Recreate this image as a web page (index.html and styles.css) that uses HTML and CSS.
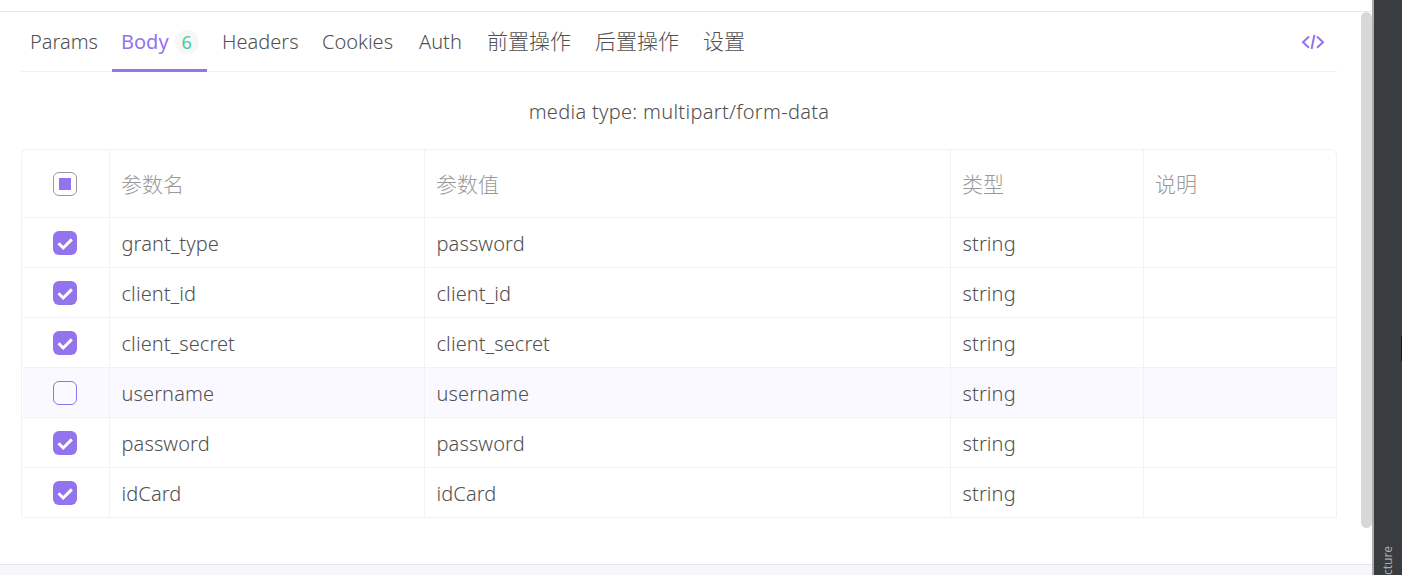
FILE: index.html
```html
<!DOCTYPE html>
<html lang="zh-CN">

<head>
    <meta charset="UTF-8">
    <meta name="viewport" content="width=device-width, initial-scale=1.0">
    <title>Body</title>
    <link rel="stylesheet" href="styles.css">
</head>

<body>

    <div class="container">
        <div class="page">
            <div class="content">
                <div class="panel">
                    <div class="tabs">
                        <a class="tab">Params</a>
                        <a class="tab active">Body <span class="count">6</span></a>
                        <a class="tab">Headers</a>
                        <a class="tab">Cookies</a>
                        <a class="tab">Auth</a>
                        <a class="tab cn">前置操作</a>
                        <a class="tab cn">后置操作</a>
                        <a class="tab cn">设置</a>
                        <svg class="code" viewBox="0 0 24 16" width="24" height="16">
                            <path d="M8 2.5 2 8.2 8 13.8M16 2.5l6 5.7-6 5.6M13.4 1l-2.8 14" />
                        </svg>
                    </div>

                    <div class="media-type">media type: multipart/form-data</div>

                    <table class="params">
                        <thead>
                            <tr>
                                <th class="check"><span class="checkbox partial"></span></th>
                                <th class="name">参数名</th>
                                <th class="value">参数值</th>
                                <th class="type">类型</th>
                                <th class="desc">说明</th>
                            </tr>
                        </thead>
                        <tbody>
                            <tr>
                                <td class="check"><span class="checkbox checked"><svg viewBox="0 0 24 24"><path d="m5.5 12.3 4.7 4.7 8.6-8.6" /></svg></span></td>
                                <td>grant_type</td>
                                <td>password</td>
                                <td>string</td>
                                <td></td>
                            </tr>
                            <tr>
                                <td class="check"><span class="checkbox checked"><svg viewBox="0 0 24 24"><path d="m5.5 12.3 4.7 4.7 8.6-8.6" /></svg></span></td>
                                <td>client_id</td>
                                <td>client_id</td>
                                <td>string</td>
                                <td></td>
                            </tr>
                            <tr>
                                <td class="check"><span class="checkbox checked"><svg viewBox="0 0 24 24"><path d="m5.5 12.3 4.7 4.7 8.6-8.6" /></svg></span></td>
                                <td>client_secret</td>
                                <td>client_secret</td>
                                <td>string</td>
                                <td></td>
                            </tr>
                            <tr class="hover">
                                <td class="check"><span class="checkbox"></span></td>
                                <td>username</td>
                                <td>username</td>
                                <td>string</td>
                                <td></td>
                            </tr>
                            <tr>
                                <td class="check"><span class="checkbox checked"><svg viewBox="0 0 24 24"><path d="m5.5 12.3 4.7 4.7 8.6-8.6" /></svg></span></td>
                                <td>password</td>
                                <td>password</td>
                                <td>string</td>
                                <td></td>
                            </tr>
                            <tr>
                                <td class="check"><span class="checkbox checked"><svg viewBox="0 0 24 24"><path d="m5.5 12.3 4.7 4.7 8.6-8.6" /></svg></span></td>
                                <td>idCard</td>
                                <td>idCard</td>
                                <td>string</td>
                                <td></td>
                            </tr>
                        </tbody>
                    </table>
                </div>
                <div class="scrollbar"></div>
            </div>
            <div class="footer"></div>
        </div>
        <div class="sidebar">
            <span class="label">cture</span>
            <div class="marker"></div>
        </div>
    </div>

</body>

</html>
```
FILE: styles.css
```css
* {
    box-sizing: border-box;
}

body {
    margin: 0;
    font-family: "Noto Sans", "Noto Sans CJK SC", sans-serif;
    font-size: 20px;
    font-weight: 300;
    color: #505050;
    background-color: #fff;
}

.container {
    display: flex;
    height: 575px;
    overflow: hidden;
}

.page {
    display: flex;
    flex-direction: column;
    width: 1372px;
    padding-top: 11px;
}

.content {
    display: flex;
    justify-content: space-between;
    height: 553px;
    border-top: 1px solid #e8e8e8;
}

.panel {
    width: 1316px;
    margin-left: 21px;
}

.tabs {
    display: grid;
    grid-template-columns: 85px 95px 94px 91px 62px 102px 102px 60px 1fr;
    column-gap: 6px;
    align-items: center;
    height: 60px;
    border-bottom: 1px solid #f2f2f2;
}

.tab {
    display: flex;
    align-items: center;
    height: 60px;
    padding: 2px 0 0 9px;
    border-bottom: 3px solid transparent;
    white-space: nowrap;
}

.tab.cn {
    padding: 0 0 2px 9px;
    font-size: 21px;
}

.tab.active {
    color: #9373ee;
    font-weight: 400;
    border-bottom-color: #9373ee;
}

.count {
    width: 24px;
    height: 24px;
    margin-left: 6px;
    border-radius: 50%;
    background-color: #f7f7f7;
    color: #3ecf9b;
    font-size: 18px;
    line-height: 25px;
    text-align: center;
}

.code {
    justify-self: end;
    margin-right: 12px;
    fill: none;
    stroke: #9373ee;
    stroke-width: 2;
}

.media-type {
    height: 77px;
    line-height: 80px;
    letter-spacing: 0.3px;
    text-align: center;
}

.params {
    width: 1316px;
    table-layout: fixed;
    border-collapse: separate;
    border-spacing: 0;
    border: 1px solid #f2f2f2;
    border-width: 1px 0 0 1px;
    border-radius: 6px 6px 0 0;
}

.params th,
.params td {
    height: 50px;
    padding: 2px 11px 0;
    border: 1px solid #f2f2f2;
    border-width: 0 1px 1px 0;
    font-weight: 300;
    line-height: 28px;
    text-align: left;
}

.params td {
    padding-left: 11.5px;
    letter-spacing: 0.1px;
}

.params th {
    height: 68px;
    padding-top: 0;
    color: #999;
    font-size: 21px;
}

.params th:last-child {
    border-top-right-radius: 6px;
}

.params .check {
    width: 88px;
    padding: 0;
    border-left: 1px solid #fff;
}

.params th.check {
    border-top-left-radius: 6px;
}

.name {
    width: 315px;
}

.value {
    width: 526px;
}

.type,
.desc {
    width: 193px;
}

.hover {
    background-color: #faf9ff;
}

.checkbox {
    display: block;
    width: 24px;
    height: 24px;
    margin: 1px auto 0 30px;
    border: 1px solid #9373ee;
    border-radius: 6px;
}

.checkbox.checked {
    border: 0;
    background-color: #9373ee;
}

.checkbox svg {
    display: block;
    fill: none;
    stroke: #fff;
    stroke-width: 3;
}

.checkbox.partial {
    padding: 5px;
    border-color: #999;
}

.checkbox.partial::before {
    content: "";
    display: block;
    width: 12px;
    height: 12px;
    background-color: #9373ee;
}

.scrollbar {
    width: 11px;
    height: 516px;
    border-radius: 6px;
    background-color: #d8d8d8;
}

.footer {
    height: 11px;
    border-top: 1px solid #e4e7ed;
    background-color: #f7f7fa;
}

.sidebar {
    display: flex;
    align-items: flex-end;
    justify-content: space-between;
    width: 30px;
    border-left: 2px solid #adadad;
    background-color: #393d3f;
}

.label {
    height: 33px;
    margin-left: 5px;
    font-family: "Noto Sans", sans-serif;
    font-size: 12px;
    font-weight: 400;
    line-height: 17px;
    color: #aaa;
    writing-mode: vertical-rl;
    transform: rotate(180deg);
}

.marker {
    width: 1px;
    height: 25px;
    margin-bottom: 214px;
    background-color: #06202f;
}
```
